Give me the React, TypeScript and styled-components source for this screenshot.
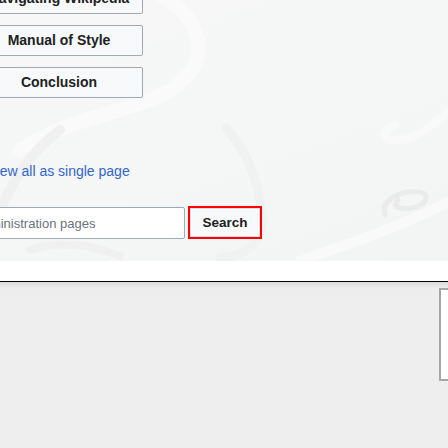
import React from "react";
import styled, { createGlobalStyle } from "styled-components";

const Global = createGlobalStyle`
  html, body { margin: 0; padding: 0; background: #eeeeee; }
  body { font-family: "Liberation Sans", Arial, sans-serif; }
  #root { width: 448px; height: 448px; overflow: hidden; }
`;

const Page = styled.div`
  width: 448px;
  height: 448px;
  overflow: hidden;
  display: flex;
  flex-direction: column;
  background: #eeeeee;
`;

const Hero = styled.section`
  position: relative;
  height: 261px;
  flex: none;
  overflow: hidden;
  background: linear-gradient(160deg, #f7f7f7 0%, #f5f6f6 55%, #f3f4f4 100%);
`;

const Decor = styled.svg`
  position: absolute;
  left: 0;
  top: 0;
  width: 448px;
  height: 261px;
  pointer-events: none;
`;

const Content = styled.div`
  position: relative;
  display: flex;
  flex-direction: column;
  align-items: flex-start;
  margin-top: -17px;
`;

const MenuList = styled.div`
  display: flex;
  flex-direction: column;
  gap: 11px;
  margin-left: -25px;
`;

const MenuButton = styled.button`
  width: 168px;
  height: 31px;
  box-sizing: border-box;
  border: 1px solid #a2a9b1;
  border-radius: 2px;
  background: #f8f9fa;
  color: #202122;
  font-family: "Liberation Sans", Arial, sans-serif;
  font-weight: bold;
  font-size: 14px;
  text-align: center;
  padding: 0;
  line-height: 29px;
`;

const SinglePageLink = styled.a`
  display: block;
  margin-top: 65px;
  margin-left: -12.5px;
  font-family: "Liberation Sans", Arial, sans-serif;
  font-size: 14px;
  line-height: 16px;
  text-decoration: none;
  white-space: nowrap;
  color: #3366cc !important;
`;

const SearchRow = styled.form`
  display: flex;
  align-items: stretch;
  gap: 3px;
  margin-top: 27px;
  margin-left: -37px;
`;

const SearchInput = styled.input`
  width: 222px;
  height: 32px;
  box-sizing: border-box;
  border: 1px solid #a2a9b1;
  border-radius: 2px;
  background: #ffffff;
  padding: 0 0 0 10px;
  margin-top: 1px;
  font-family: "Liberation Sans", Arial, sans-serif;
  font-size: 13px;
  color: #202122;
  outline: none;
  &::placeholder { color: #6b7280; opacity: 1; }
`;

const SearchButton = styled.button`
  width: 74px;
  height: 33px;
  box-sizing: border-box;
  border: 2px solid #ff0000;
  border-radius: 0;
  background: #f8f9fa;
  box-shadow: inset 0 0 0 1px #dadde1;
  color: #202122;
  font-family: "Liberation Sans", Arial, sans-serif;
  font-weight: bold;
  font-size: 13.5px;
  padding: 0;
`;

const Band = styled.div`
  height: 20px;
  flex: none;
  background: #ffffff;
  border-bottom: 1px solid #000000;
`;

const Lower = styled.div`
  flex: 1;
  display: flex;
  justify-content: flex-end;
  align-items: flex-start;
  padding-top: 6px;
  background: linear-gradient(#dcdcdc 0px, #eeeeee 7px, #eeeeee 100%);
`;

const SideBox = styled.div`
  width: 100px;
  height: 93px;
  box-sizing: border-box;
  margin-right: -91px;
  background: #ffffff;
  border: 2px solid #a7a7a7;
  border-right: none;
`;

export default function App() {
  return (
    <Page>
      <Global />
      <Hero>
        <Decor viewBox="0 0 448 261">
          <path d="M150 -10 C 215 20, 215 75, 150 100 C 100 118, 70 120, 20 150" stroke="#fafafa" strokeWidth="14" fill="none" strokeLinecap="round" />
          <path d="M -10 230 C 10 190, 20 160, 60 130" stroke="#f0f0f0" strokeWidth="10" fill="none" strokeLinecap="round" />
          <path d="M226 128 C 245 150, 258 175, 262 215 C 264 240, 250 255, 220 258" stroke="#f0f1f1" strokeWidth="9" fill="none" strokeLinecap="round" />
          <path d="M30 250 C 60 240, 90 244, 120 256" stroke="#f0f0f0" strokeWidth="8" fill="none" strokeLinecap="round" />
          <path d="M395 125 C 378 133, 382 142, 400 140 C 420 138, 440 120, 460 100" stroke="#f9f9f9" strokeWidth="8" fill="none" strokeLinecap="round" />
          <path d="M385 215 C 380 200, 400 190, 420 192 C 430 194, 428 205, 412 208 C 398 210, 392 206, 398 200" stroke="#ebebeb" strokeWidth="5" fill="none" strokeLinecap="round" />
          <path d="M300 261 C 360 240, 420 220, 470 190" stroke="#f9f9f9" strokeWidth="10" fill="none" strokeLinecap="round" />
        </Decor>
        <Content>
          <MenuList>
            <MenuButton type="button">Navigating Wikipedia</MenuButton>
            <MenuButton type="button">Manual of Style</MenuButton>
            <MenuButton type="button">Conclusion</MenuButton>
          </MenuList>
          <SinglePageLink href="#">View all as single page</SinglePageLink>
          <SearchRow onSubmit={(e) => e.preventDefault()}>
            <SearchInput type="search" placeholder="Administration pages" />
            <SearchButton type="submit">Search</SearchButton>
          </SearchRow>
        </Content>
      </Hero>
      <Band />
      <Lower>
        <SideBox />
      </Lower>
    </Page>
  );
}
